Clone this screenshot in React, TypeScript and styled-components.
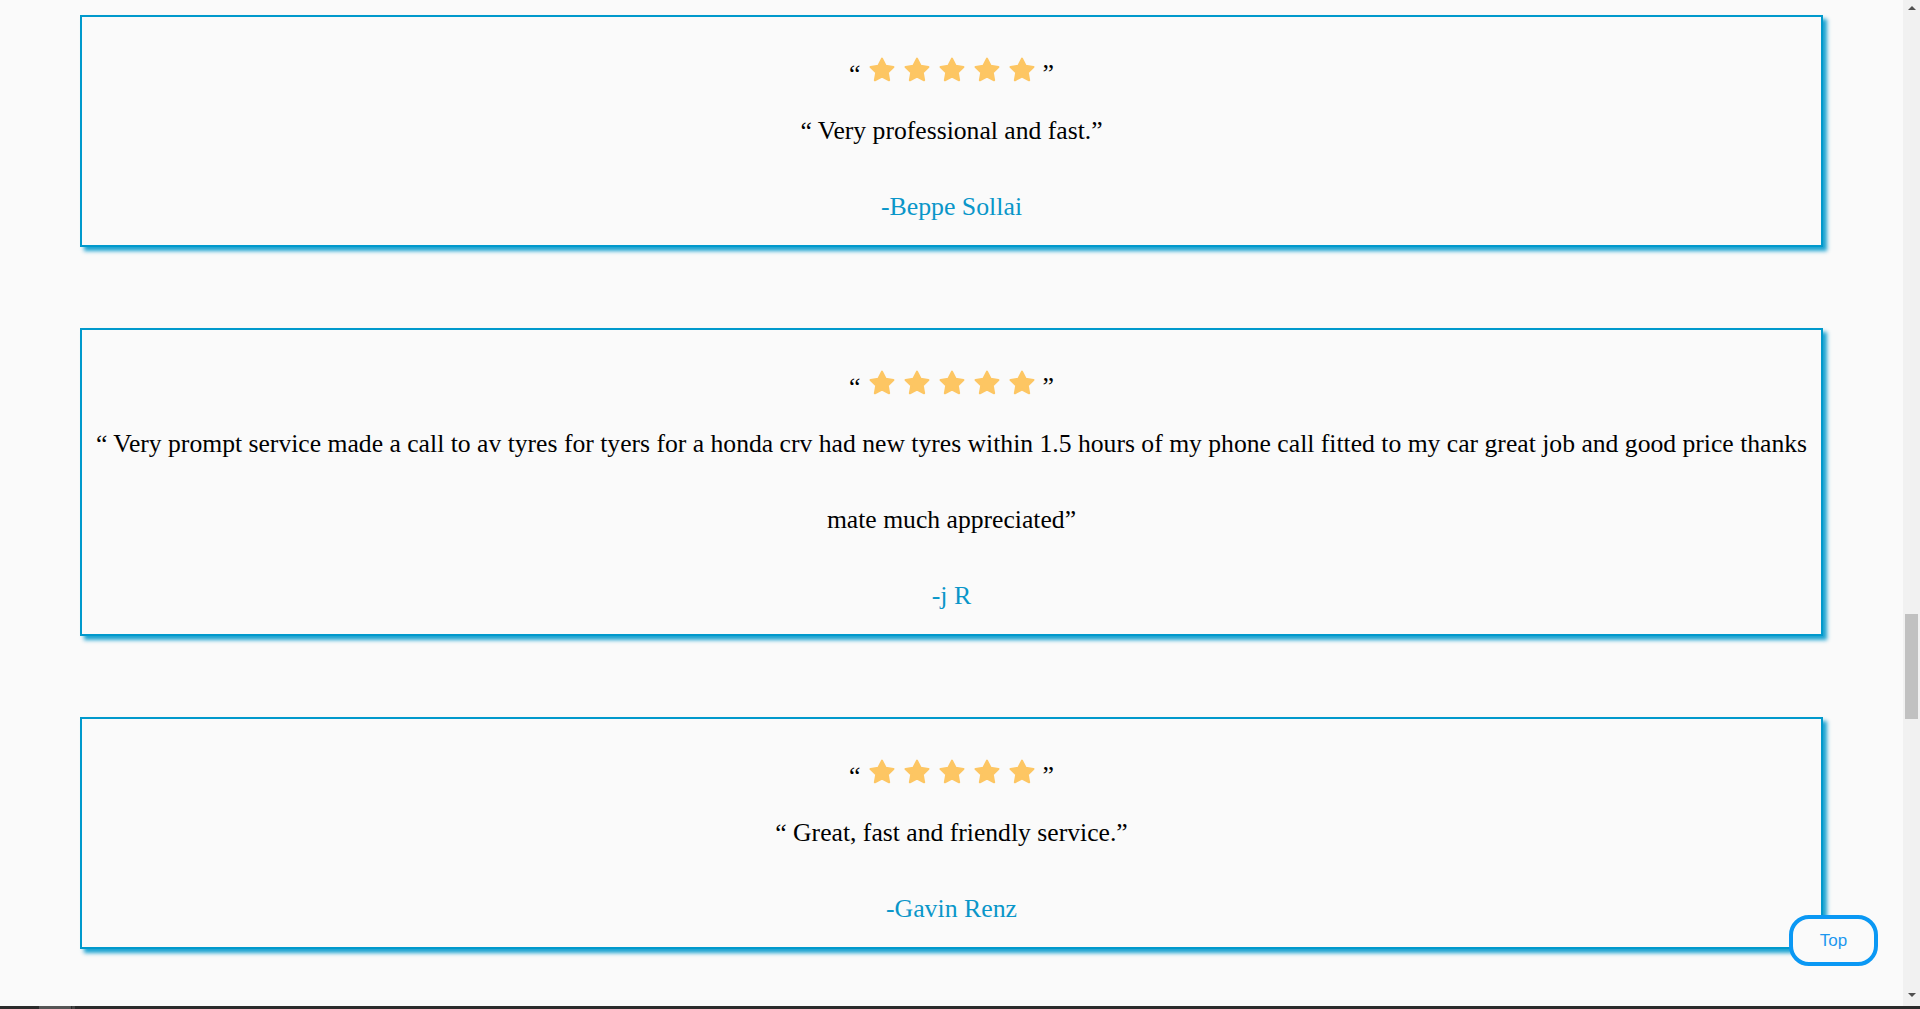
import React from "react";
import styled, { createGlobalStyle } from "styled-components";

const Global = createGlobalStyle`
  html, body {
    margin: 0;
    padding: 0;
    height: 100%;
    overflow: hidden;
    background: #fafafa;
  }
  #root { height: 100%; }
`;

const Screen = styled.div`
  height: 1009px;
  display: flex;
  flex-direction: column;
`;

const Viewport = styled.div`
  flex: 1;
  display: flex;
  min-height: 0;
`;

const Main = styled.main`
  position: relative;
  flex: 1;
  padding: 15px 80px 0 80px;
  display: flex;
  flex-direction: column;
  gap: 81px;
  background: #fafafa;
  font-family: "Liberation Serif", "Times New Roman", serif;
`;

const Card = styled.section`
  border: 2px solid #0099cc;
  box-shadow: 4px 4px 4px rgba(0, 153, 204, 0.9);
  padding: 30px 2px 0 2px;
  text-align: center;
  background: #fafafa;
`;

const StarsRow = styled.div`
  height: 46px;
  display: flex;
  align-items: center;
  justify-content: center;
  gap: 7px;
`;

const Quote = styled.span`
  font-size: 25.8px;
  line-height: 1;
  padding-top: 8px;
  color: #000;
`;

const Review = styled.p`
  margin: 0;
  font-size: 25.65px;
  line-height: 76px;
  color: #000;
`;

const Author = styled.p`
  margin: 0;
  font-size: 25.8px;
  line-height: 76px;
  color: #0a96c9;
`;

const ScrollTrack = styled.div`
  width: 17px;
  background: #f1f1f1;
  display: flex;
  flex-direction: column;
  align-items: center;
`;

const Arrow = styled.div<{ $down?: boolean }>`
  width: 0;
  height: 0;
  border-left: 4px solid transparent;
  border-right: 4px solid transparent;
  ${(p) =>
    p.$down
      ? "border-top: 4px solid #505050; margin-top: auto; margin-bottom: 9px;"
      : "border-bottom: 4px solid #505050; margin-top: 6px;"}
`;

const Thumb = styled.div`
  width: 13px;
  height: 105px;
  background: #c1c1c1;
  margin-top: 604px;
`;

const Taskbar = styled.div`
  height: 3px;
  background: #2b2b2b;
  display: flex;
`;

const TaskItem = styled.div<{ $w: number; $c: string; $ml: number }>`
  width: ${(p) => p.$w}px;
  margin-left: ${(p) => p.$ml}px;
  background: ${(p) => p.$c};
`;

const TopButton = styled.button`
  position: absolute;
  right: 25px;
  bottom: 40px;
  width: 89px;
  height: 51px;
  border: 4px solid #0a98f4;
  border-radius: 20px;
  background: #fafafa;
  color: #1d97ef;
  font-family: "Liberation Sans", Arial, sans-serif;
  font-size: 17px;
  cursor: pointer;
  padding: 0;
`;

const Star = () => (
  <svg width="28" height="28" viewBox="0 0 24 24">
    <polygon
      points="12,2.3 15.09,8.36 21.8,9.37 16.9,14.14 18.1,20.8 12,17.67 5.9,20.8 7.1,14.14 2.2,9.37 8.91,8.36"
      fill="#fdc663"
      stroke="#fdc663"
      strokeWidth="1.8"
      strokeLinejoin="round"
    />
  </svg>
);

const reviews = [
  { text: "Very professional and fast.", author: "-Beppe Sollai" },
  {
    text:
      "Very prompt service made a call to av tyres for tyers for a honda crv had new tyres within 1.5 hours of my phone call fitted to my car great job and good price thanks mate much appreciated",
    author: "-j R",
  },
  { text: "Great, fast and friendly service.", author: "-Gavin Renz" },
];

export default function App() {
  return (
    <>
      <Global />
      <Screen>
        <Viewport>
          <Main>
            {reviews.map((r) => (
              <Card key={r.author}>
                <StarsRow>
                  <Quote>“</Quote>
                  {[0, 1, 2, 3, 4].map((i) => (
                    <Star key={i} />
                  ))}
                  <Quote>”</Quote>
                </StarsRow>
                <Review>“ {r.text}”</Review>
                <Author>{r.author}</Author>
              </Card>
            ))}
            <TopButton>Top</TopButton>
          </Main>
          <ScrollTrack>
            <Arrow />
            <Thumb />
            <Arrow $down />
          </ScrollTrack>
        </Viewport>
        <Taskbar>
          <TaskItem $w={32} $c="#555555" $ml={39} />
          <TaskItem $w={3} $c="#444444" $ml={1} />
        </Taskbar>
      </Screen>
    </>
  );
}
